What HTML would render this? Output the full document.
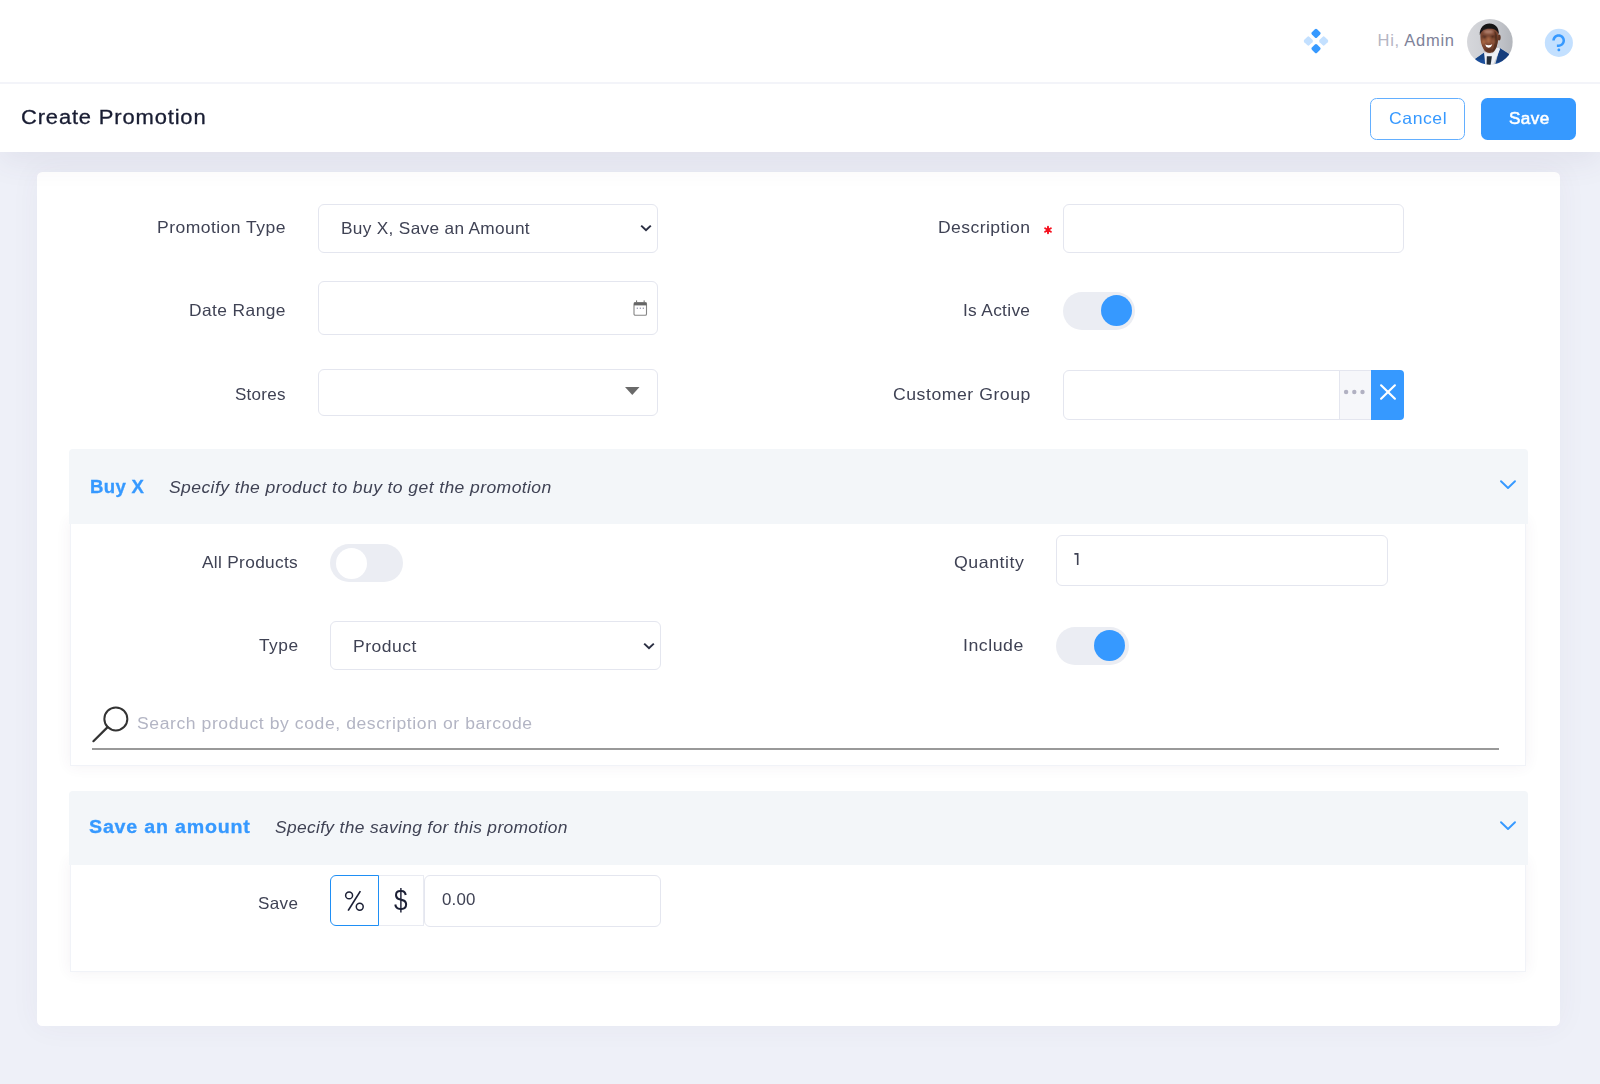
<!DOCTYPE html>
<html>
<head>
<meta charset="utf-8">
<title>Create Promotion</title>
<style>
*{box-sizing:border-box;margin:0;padding:0}
html,body{width:1600px;height:1084px;overflow:hidden}
body{background:#eef0f8;font-family:"Liberation Sans",sans-serif;color:#3f4254;position:relative}
.a{position:absolute}
.t{position:absolute;white-space:nowrap;line-height:1}
#topbar{position:absolute;left:0;top:0;width:1600px;height:82px;background:#fff;z-index:6}
#topline{position:absolute;left:0;top:82px;width:1600px;height:2px;background:#f3f4f9;z-index:6}
#subheader{position:absolute;left:0;top:83px;width:1600px;height:69px;background:#fff;box-shadow:0 10px 30px 0 rgba(82,63,105,.08);z-index:5}
#hdr{position:absolute;left:0;top:0;width:1600px;height:152px;z-index:7}
#panel{position:absolute;left:36.5px;top:172.1px;width:1523.35px;height:853.9px;background:#fff;border-radius:5.5px;box-shadow:0 0 30px 0 rgba(82,63,105,.05)}
.inp{position:absolute;background:#fff;border:1px solid #e4e6ef;border-radius:6px}
.cb{position:absolute;background:#fff;border:1px solid #f1f3f8;box-shadow:0 0 14px 0 rgba(82,63,105,.07)}
.hd{position:absolute;background:#f3f6f9;border-radius:4px 4px 0 0}
.sw{position:absolute;width:72.5px;height:38px;border-radius:19px;background:#ebedf3}
.sw i{position:absolute;top:3.2px;width:31px;height:31px;border-radius:50%}
.sw.on i{left:38px;background:#3699ff}
.sw.off i{left:5.7px;top:4.2px;background:#fff}
svg{position:absolute;overflow:visible}
</style>
</head>
<body>
<div id="topbar"></div>
<div id="topline"></div>
<div id="subheader"></div>
<div id="panel"></div>
<div class="t" style="left:156.60px;top:219.00px;font-size:16.5px;color:#3f4254;letter-spacing:0.428px;transform:scaleX(1.0627);transform-origin:0 0;">Promotion Type</div>
<div class="inp" style="left:318px;top:204px;width:339.5px;height:48.5px"></div>
<div class="t" style="left:340.70px;top:220.00px;font-size:16.5px;color:#3f4254;letter-spacing:0.308px;transform:scaleX(1.0452);transform-origin:0 0;">Buy X, Save an Amount</div>
<svg style="left:640px;top:224px" width="12" height="8" viewBox="0 0 12 8"><path d="M1.2 1.6 L6 6.2 L10.8 1.6" fill="none" stroke="#2a2e42" stroke-width="2" stroke-linecap="butt" stroke-linejoin="miter"/></svg>
<div class="t" style="left:938.00px;top:219.00px;font-size:16.5px;color:#3f4254;letter-spacing:0.401px;transform:scaleX(1.0631);transform-origin:0 0;">Description</div>
<svg style="left:1043.5px;top:226.1px" width="8" height="8" viewBox="0 0 8 8"><g stroke="#f5101e" stroke-width="1.9" stroke-linecap="round"><path d="M4 0.8V7.2M1.1 2.3L6.9 5.7M6.9 2.3L1.1 5.7"/></g></svg>
<div class="inp" style="left:1062.5px;top:204px;width:341px;height:48.5px"></div>
<div class="t" style="left:188.75px;top:302.00px;font-size:16.5px;color:#3f4254;letter-spacing:0.399px;transform:scaleX(1.0524);transform-origin:0 0;">Date Range</div>
<div class="inp" style="left:318px;top:281px;width:339.5px;height:53.7px"></div>
<svg style="left:633px;top:300px" width="14.5" height="16" viewBox="0 0 14.5 16"><g fill="none" stroke="#858585" stroke-width="1.1"><rect x="1" y="2.6" width="12.5" height="12.6" rx="1.3"/></g><rect x="1" y="2.6" width="12.5" height="2.8" fill="#666"/><rect x="3" y="0.4" width="1.1" height="2.4" fill="#777"/><rect x="10.6" y="0.4" width="1.1" height="2.4" fill="#777"/><g fill="#9a9ab0"><rect x="3.7" y="7.6" width="1.3" height="1.3"/><rect x="6.7" y="7.6" width="1.3" height="1.3"/><rect x="9.7" y="7.6" width="1.3" height="1.3"/></g></svg>
<div class="t" style="left:963.20px;top:302.00px;font-size:16.5px;color:#3f4254;letter-spacing:0.298px;transform:scaleX(1.0497);transform-origin:0 0;">Is Active</div>
<div class="sw on" style="left:1062.5px;top:292px"><i></i></div>
<div class="t" style="left:234.70px;top:386.00px;font-size:16.5px;color:#3f4254;letter-spacing:0.245px;transform:scaleX(1.0325);transform-origin:0 0;">Stores</div>
<div class="inp" style="left:318px;top:369px;width:339.5px;height:46.5px"></div>
<svg style="left:625px;top:386.5px" width="14.5" height="8" viewBox="0 0 14.5 8"><path d="M0 0H14.5L7.25 8Z" fill="#6a6a6a"/></svg>
<div class="t" style="left:892.90px;top:386.00px;font-size:16.5px;color:#3f4254;letter-spacing:0.496px;transform:scaleX(1.0691);transform-origin:0 0;">Customer Group</div>
<div class="inp" style="left:1062.5px;top:369.5px;width:341.5px;height:50px;border-radius:6px"></div>
<div class="a" style="left:1339px;top:370.5px;width:32px;height:48px;background:#f6f7fa;border-left:1px solid #e4e6ef"></div>
<div class="a" style="left:1371px;top:369.5px;width:33px;height:50px;background:#3699ff;border-radius:0 4px 4px 0"></div>
<svg style="left:1340px;top:386px" width="30" height="12" viewBox="0 0 30 12"><g fill="#b1b1c2"><circle cx="6.1" cy="6" r="2.2"/><circle cx="14.3" cy="6" r="2.2"/><circle cx="22.5" cy="6" r="2.2"/></g></svg>
<svg style="left:1377.5px;top:382.3px" width="20" height="20" viewBox="0 0 20 20"><path d="M3.1 3.3L16.9 16.7M16.9 3.3L3.1 16.7" stroke="#fff" stroke-width="2.2" stroke-linecap="round" fill="none"/></svg>
<div class="cb" style="left:70.2px;top:520px;width:1455.7px;height:246px"></div>
<div class="hd" style="left:69.3px;top:449.4px;width:1458.5px;height:74.6px"></div>
<div class="t" style="left:89.90px;top:478.00px;font-size:18px;color:#3699ff;letter-spacing:0.326px;transform:scaleX(1.0322);transform-origin:0 0;font-weight:700;-webkit-text-stroke:0.3px #3699ff;">Buy X</div>
<div class="t" style="left:168.70px;top:479.00px;font-size:16.5px;color:#3f4254;letter-spacing:0.369px;transform:scaleX(1.0646);transform-origin:0 0;font-style:italic;">Specify the product to buy to get the promotion</div>
<svg style="left:1499.5px;top:480px" width="16" height="10" viewBox="0 0 16 10"><path d="M1 1.2L8 8L15 1.2" fill="none" stroke="#3699ff" stroke-width="1.9" stroke-linecap="round" stroke-linejoin="round"/></svg>
<div class="t" style="left:202.10px;top:554.00px;font-size:16.5px;color:#3f4254;letter-spacing:0.300px;transform:scaleX(1.0479);transform-origin:0 0;">All Products</div>
<div class="sw off" style="left:330px;top:543.5px"><i></i></div>
<div class="t" style="left:954.00px;top:554.00px;font-size:16.5px;color:#3f4254;letter-spacing:0.500px;transform:scaleX(1.0748);transform-origin:0 0;">Quantity</div>
<div class="inp" style="left:1056.3px;top:535px;width:331.5px;height:51.3px"></div>
<svg style="left:1070px;top:550px" width="12" height="18" viewBox="0 0 12 18"><path d="M4.4 3.9H7.7V15" fill="none" stroke="#3f4254" stroke-width="1.6"/></svg>
<div class="t" style="left:258.75px;top:637.00px;font-size:16.5px;color:#3f4254;letter-spacing:0.468px;transform:scaleX(1.0504);transform-origin:0 0;">Type</div>
<div class="inp" style="left:330px;top:621.3px;width:330.6px;height:48.4px"></div>
<div class="t" style="left:353.20px;top:638.00px;font-size:16.5px;color:#3f4254;letter-spacing:0.455px;transform:scaleX(1.0623);transform-origin:0 0;">Product</div>
<svg style="left:643px;top:642px" width="12" height="8" viewBox="0 0 12 8"><path d="M1.2 1.6 L6 6.2 L10.8 1.6" fill="none" stroke="#2a2e42" stroke-width="2"/></svg>
<div class="t" style="left:963.40px;top:637.00px;font-size:16.5px;color:#3f4254;letter-spacing:0.499px;transform:scaleX(1.0738);transform-origin:0 0;">Include</div>
<div class="sw on" style="left:1056.3px;top:627px"><i></i></div>
<svg style="left:90px;top:704px" width="42" height="40" viewBox="0 0 42 40"><circle cx="25.85" cy="14.9" r="11.5" fill="none" stroke="#333" stroke-width="2"/><path d="M17.6 23.1L3.4 37.2" stroke="#333" stroke-width="2.2" stroke-linecap="round"/></svg>
<div class="t" style="left:136.90px;top:716.00px;font-size:16px;color:#b3b5c4;letter-spacing:0.537px;transform:scaleX(1.0964);transform-origin:0 0;">Search product by code, description or barcode</div>
<div class="a" style="left:91.5px;top:747.8px;width:1407.8px;height:2px;background:#999"></div>
<div class="cb" style="left:70.2px;top:860px;width:1455.7px;height:112px"></div>
<div class="hd" style="left:69.3px;top:790.7px;width:1458.5px;height:74.1px"></div>
<div class="t" style="left:89.40px;top:818.00px;font-size:18px;color:#3699ff;letter-spacing:0.722px;transform:scaleX(1.0907);transform-origin:0 0;font-weight:700;-webkit-text-stroke:0.3px #3699ff;">Save an amount</div>
<div class="t" style="left:274.80px;top:819.00px;font-size:16.5px;color:#3f4254;letter-spacing:0.313px;transform:scaleX(1.0547);transform-origin:0 0;font-style:italic;">Specify the saving for this promotion</div>
<svg style="left:1499.5px;top:820.5px" width="16" height="10" viewBox="0 0 16 10"><path d="M1 1.2L8 8L15 1.2" fill="none" stroke="#3699ff" stroke-width="1.9" stroke-linecap="round" stroke-linejoin="round"/></svg>
<div class="t" style="left:258.00px;top:895.00px;font-size:16.5px;color:#3f4254;letter-spacing:0.347px;transform:scaleX(1.0351);transform-origin:0 0;">Save</div>
<div class="a" style="left:378.5px;top:875px;width:45px;height:51px;border:1px solid #e9ebf2;border-left:none;background:#fff"></div>
<div class="a" style="left:330px;top:875px;width:49px;height:51px;border:1.3px solid #1f8ff5;border-radius:6px 0 0 6px;background:#fff"></div>
<div class="inp" style="left:424px;top:875px;width:237px;height:51.5px"></div>
<svg style="left:340px;top:885px" width="30" height="30" viewBox="0 0 30 30"><g fill="none" stroke="#1b1f35"><circle cx="9.1" cy="10.4" r="3.45" stroke-width="1.5"/><circle cx="19.75" cy="21.75" r="3.45" stroke-width="1.5"/><path d="M20.35 6.1L8.15 25.6" stroke-width="1.7"/></g></svg>
<div class="t" style="left:394.00px;top:885.00px;font-size:29.5px;color:#1b1f35;letter-spacing:0.000px;transform:scaleX(0.8231);transform-origin:0 0;">$</div>
<div class="t" style="left:441.80px;top:891.00px;font-size:16.5px;color:#3f4254;letter-spacing:0.197px;transform:scaleX(1.0230);transform-origin:0 0;">0.00</div>
<div id="hdr">
<div class="t" style="left:21.00px;top:107.00px;font-size:20px;color:#181c32;letter-spacing:0.761px;transform:scaleX(1.0978);transform-origin:0 0;-webkit-text-stroke:0.3px #181c32;">Create Promotion</div>
<div class="a" style="left:1370px;top:97.7px;width:95.2px;height:42px;border:1.4px solid #63afff;border-radius:6.5px;background:#fff"></div>
<div class="t" style="left:1388.75px;top:110.00px;font-size:16.5px;color:#3699ff;letter-spacing:0.530px;transform:scaleX(1.0673);transform-origin:0 0;">Cancel</div>
<div class="a" style="left:1481.2px;top:97.7px;width:95px;height:42px;border-radius:6.5px;background:#3699ff"></div>
<div class="t" style="left:1508.60px;top:110.00px;font-size:16.5px;color:#fff;letter-spacing:0.368px;transform:scaleX(1.0372);transform-origin:0 0;-webkit-text-stroke:0.55px #fff;">Save</div>
<svg style="left:1302.7px;top:27.95px" width="26" height="26" viewBox="-13 -13 26 26"><g transform="rotate(45)"><rect x="-9.1" y="-9.1" width="7.4" height="7.4" rx="1.6" fill="#3699ff"/><rect x="1.7" y="1.7" width="7.4" height="7.4" rx="1.6" fill="#3699ff"/><rect x="1.7" y="-9.1" width="7.4" height="7.4" rx="1.6" fill="#c3e0ff"/><rect x="-9.1" y="1.7" width="7.4" height="7.4" rx="1.6" fill="#c3e0ff"/></g></svg>
<div class="t" style="left:1377.6px;top:32.00px;font-size:16.5px;letter-spacing:0.724px;color:#b5b5c3">Hi, <span style="color:#7e8299">Admin</span></div>
<svg style="left:1467.2px;top:18.6px" width="45.8" height="45.8" viewBox="0 0 46 46"><defs><clipPath id="ac"><circle cx="23" cy="23" r="23"/></clipPath><filter id="bl" x="-20%" y="-20%" width="140%" height="140%"><feGaussianBlur stdDeviation="0.65"/></filter><filter id="bl2" x="-40%" y="-40%" width="180%" height="180%"><feGaussianBlur stdDeviation="1.2"/></filter><linearGradient id="abg" x1="0" x2="1"><stop offset="0" stop-color="#d6d7db"/><stop offset="0.5" stop-color="#cbcdd2"/><stop offset="1" stop-color="#b3b6bc"/></linearGradient></defs>
<g clip-path="url(#ac)"><rect width="46" height="46" fill="url(#abg)"/>
<g filter="url(#bl)">
<path d="M7.5 40.6 L17.2 33.8 L21 47 L28 47 L33 29.4 L42.4 35.4 L47 47 L0 47Z" fill="#1b4f9c"/>
<path d="M33 29.4 L42.4 35.4 L39 41 L29.4 44Z" fill="#153d7c"/>
<path d="M8 40.4 L17.2 33.8 L18.2 41Z" fill="#174587"/>
<path d="M17.2 33.8 L20.4 30.4 L32.3 28.9 L33.2 30.3 L25.8 47 L18.4 47Z" fill="#edf0f6"/>
<path d="M19.9 37.5 L25 37.3 L23.6 47 L19.6 47Z" fill="#252d39"/>
<ellipse cx="32.2" cy="18.6" rx="1.6" ry="3" fill="#5b3323"/>
<path d="M13.4 17 C13.2 9.4 17 5.6 22.6 5.6 C28.4 5.6 31.8 9.6 31.6 17 C31.5 22 30.7 26 28.7 30 C26.9 33.4 24.8 34.2 22.6 34.2 C20.4 34.2 18.2 33.2 16.6 30.2 C14.4 26 13.5 22 13.4 17Z" fill="#7b4630"/>
<path d="M27.5 12 C30.5 14 31.6 20 30 27 C29 30.6 27 33 25 34 C27.6 28 28.6 20 27.5 12Z" fill="#4f2b1e" opacity=".8"/>
<path d="M12.9 16.4 C12.2 8.6 17.4 4.5 22.6 4.6 C28.2 4.7 32.6 8.6 31.9 15.8 C30.9 11.4 27.6 9.6 22.6 9.7 C17.6 9.8 14.4 11.6 12.9 16.4Z" fill="#191319"/>
</g>
<g filter="url(#bl2)">
<ellipse cx="21.6" cy="12.8" rx="4.8" ry="2" fill="#b98a78" opacity=".85"/>
<ellipse cx="21.6" cy="21.4" rx="1.9" ry="3.2" fill="#b8744e" opacity=".8"/>
<ellipse cx="16.8" cy="23" rx="2.1" ry="2.6" fill="#b66f47" opacity=".85"/>
<ellipse cx="26.4" cy="22.8" rx="2" ry="2.2" fill="#9a5f43" opacity=".7"/>
<ellipse cx="17.6" cy="18" rx="2.1" ry="0.9" fill="#24130f" opacity=".85"/>
<ellipse cx="25.6" cy="17.6" rx="2.1" ry="0.9" fill="#24130f" opacity=".85"/>
<ellipse cx="22.4" cy="31.4" rx="4.4" ry="2" fill="#4a281d" opacity=".7"/>
</g>
<g filter="url(#bl)"><path d="M18.2 25.6 Q21.8 27 25.4 25.4 Q24.2 29 21.6 29 Q19.2 28.8 18.2 25.6Z" fill="#fff"/></g>
</g></svg>
<svg style="left:1542.3px;top:26.3px" width="33.72" height="33.72" viewBox="0 0 24 24"><circle fill="#c3e0ff" cx="12" cy="12" r="10"/><path d="M12,16 C12.5522847,16 13,16.4477153 13,17 C13,17.5522847 12.5522847,18 12,18 C11.4477153,18 11,17.5522847 11,17 C11,16.4477153 11.4477153,16 12,16 Z M10.591,14.868 L10.591,13.209 L11.851,13.209 C13.447,13.209 14.602,11.991 14.602,10.395 C14.602,8.799 13.447,7.581 11.851,7.581 C10.234,7.581 9.121,8.799 9.121,10.395 L7.336,10.395 C7.336,7.875 9.31,5.922 11.851,5.922 C14.392,5.922 16.387,7.875 16.387,10.395 C16.387,12.915 14.392,14.868 11.851,14.868 L10.591,14.868 Z" fill="#3699ff"/></svg>
</div>
</body>
</html>
